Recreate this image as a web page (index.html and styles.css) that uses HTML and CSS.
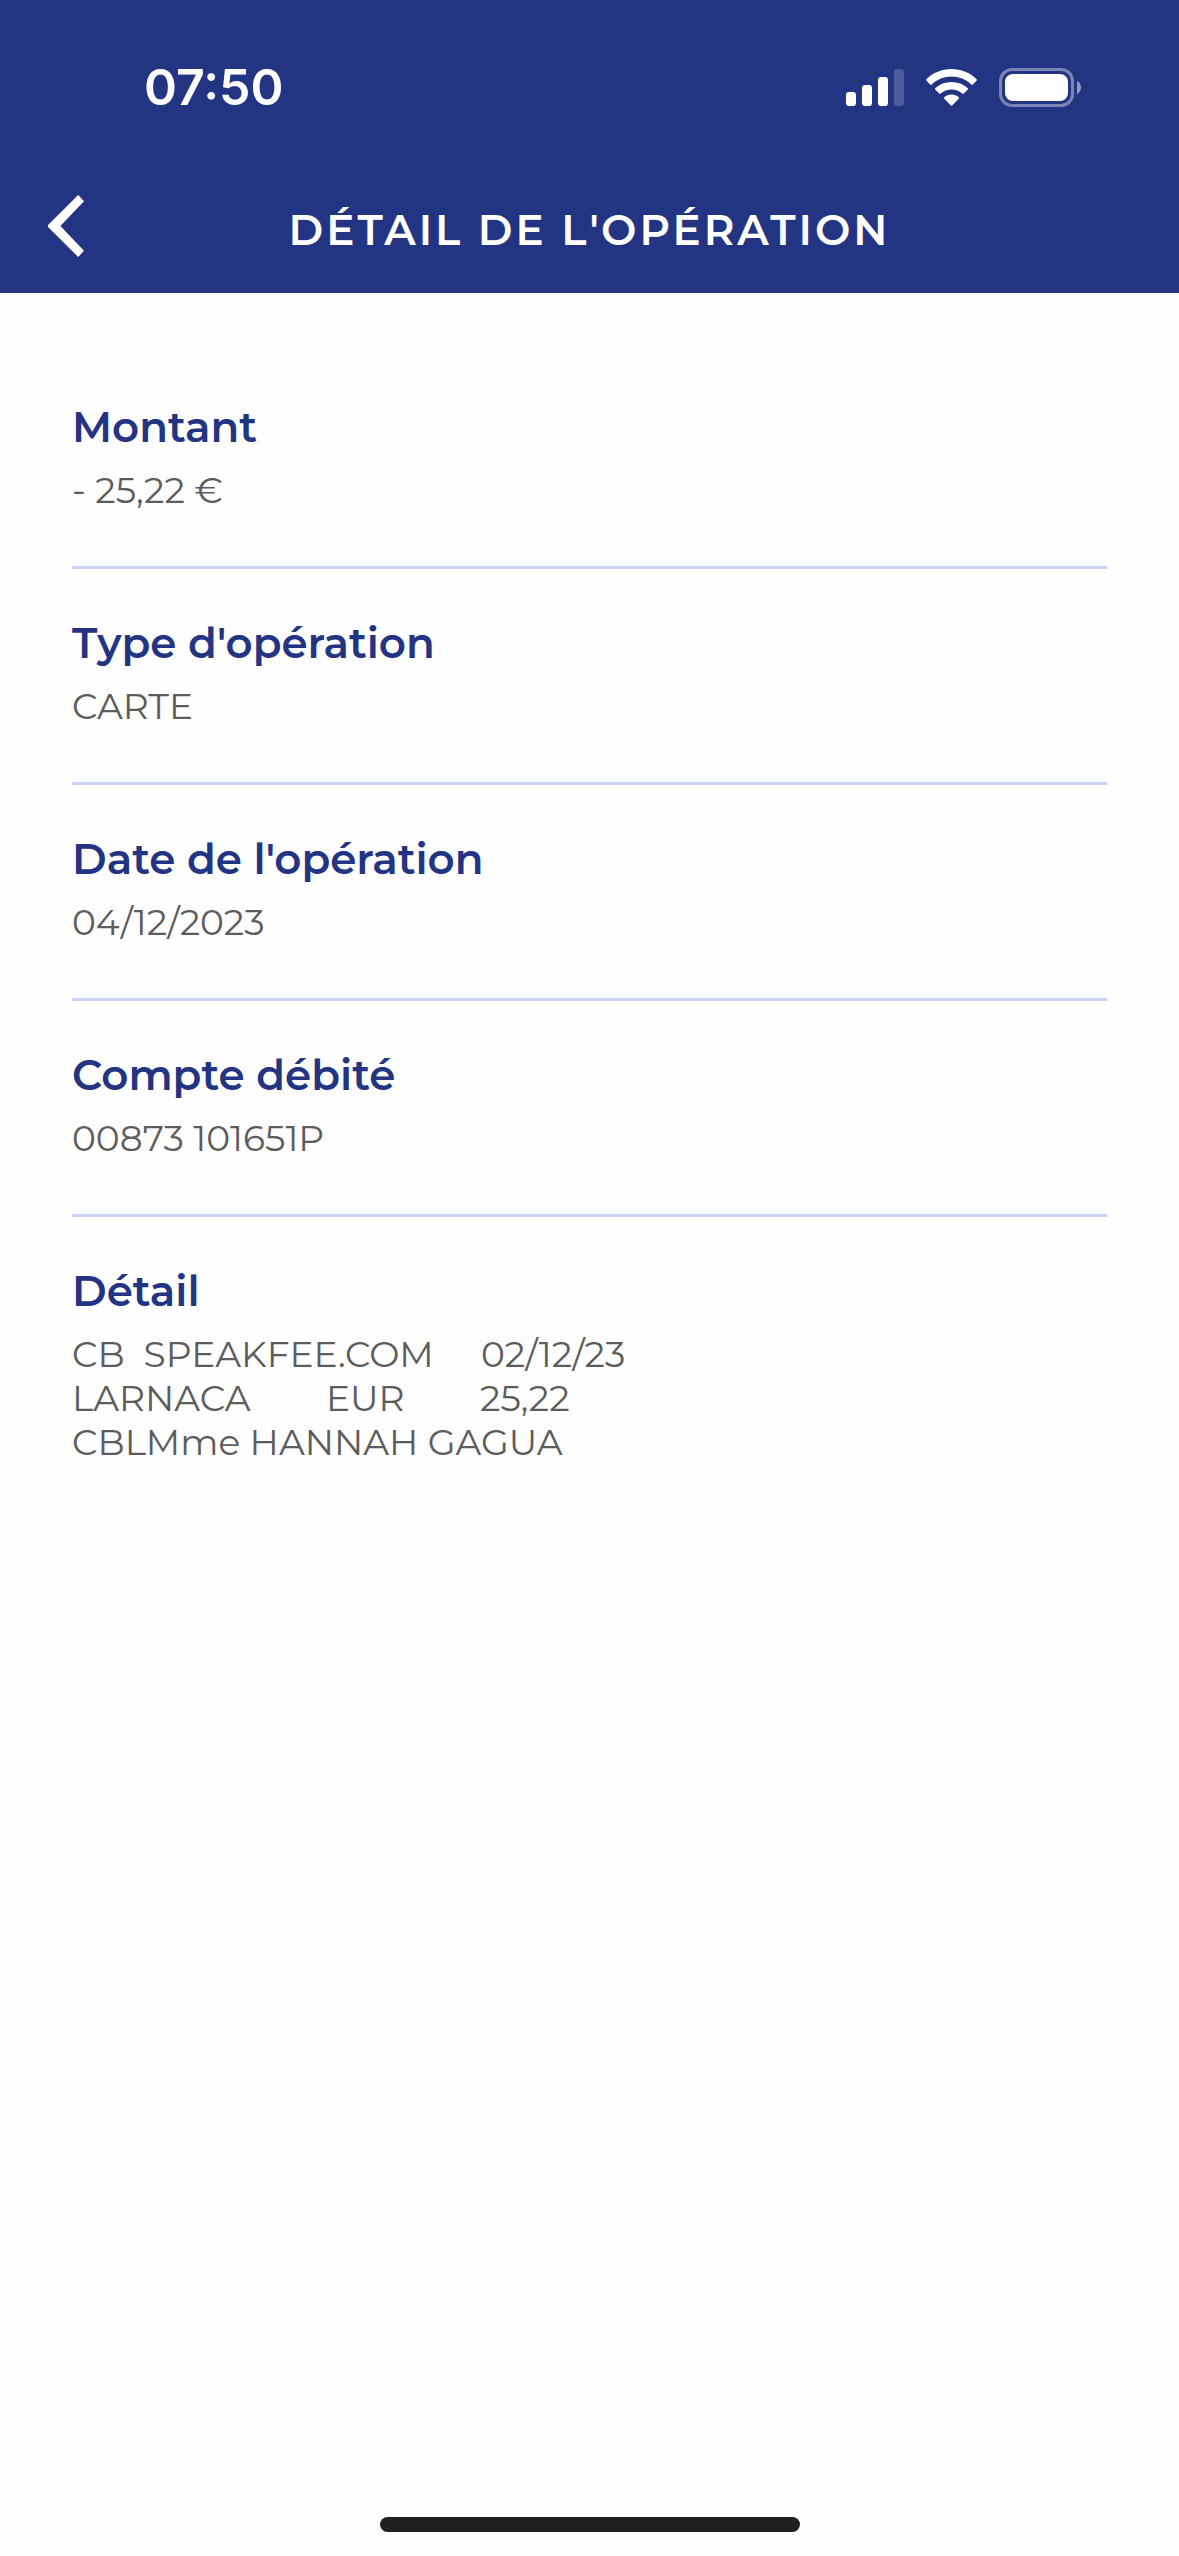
FILE: index.html
```html
<!DOCTYPE html>
<html lang="fr">
<head>
<meta charset="utf-8">
<meta name="viewport" content="width=device-width, initial-scale=1">
<title>Détail de l'opération</title>
<link rel="stylesheet" href="styles.css">
</head>
<body>
<div class="screen">
  <header class="header">
    <div class="status">
      <time class="clock">07:50</time>
      <div class="indicators">
        <svg width="58" height="37" viewBox="0 0 58 37" fill="#fff" aria-label="Réseau" role="img">
          <rect x="0" y="23" width="10" height="14" rx="3"/>
          <rect x="16" y="16" width="10" height="21" rx="3"/>
          <rect x="32" y="8" width="10" height="29" rx="3"/>
          <rect x="48" y="0" width="10" height="37" rx="3" opacity=".2"/>
        </svg>
        <svg width="51" height="37" viewBox="0 0 51 37" fill="#fff" aria-label="Wi-Fi" role="img">
          <path d="M25.500 0C35.100 0 44 3.700 50.400 10.100Q51.200 10.900 50.400 11.700L46.800 15.400Q46 16.100 45.200 15.400C39.900 10.300 33 7.500 25.500 7.500S11.100 10.300 5.800 15.400Q5 16.100 4.200 15.400L.6 11.700Q-.2 10.900.6 10.100C7 3.700 15.900 0 25.500 0Z"/>
          <path d="M25.500 13C31.600 13 37.300 15.200 41.600 19.100Q42.400 19.900 41.600 20.700L37.800 24.400Q37 25.100 36.200 24.400C33.200 21.900 29.500 20.500 25.500 20.500S17.800 21.900 14.800 24.400Q14 25.100 13.200 24.400L9.400 20.700Q8.600 19.900 9.400 19.100C13.700 15.200 19.400 13 25.500 13Z"/>
          <path d="M25.500 25.600C28.200 25.600 30.700 26.500 32.700 28.200Q33.500 29 32.700 29.800L26.300 36.300Q25.500 37 24.700 36.300L18.300 29.800Q17.500 29 18.300 28.200C20.300 26.500 22.800 25.600 25.500 25.600Z"/>
        </svg>
        <svg width="82" height="39" viewBox="0 0 82 39" fill="#fff" aria-label="Batterie" role="img">
          <rect x="1.500" y="1.500" width="72" height="36" rx="11.500" fill="none" stroke="#fff" stroke-width="3" opacity=".4"/>
          <rect x="6" y="6" width="63" height="27" rx="8"/>
          <path d="M78 13C80.500 14.100 82 16.600 82 19.500S80.500 24.900 78 26Z" opacity=".5"/>
        </svg>
      </div>
    </div>
    <div class="navbar">
      <button class="back" type="button" aria-label="Retour">
        <svg width="36" height="62" viewBox="0 0 36 62" fill="#fff" aria-hidden="true">
          <path d="M30.200 0L36 6.200L12.400 31L36 55.800L30.200 62L0 31.900V30.100Z"/>
        </svg>
      </button>
      <h1 class="title">DÉTAIL DE L'OPÉRATION</h1>
    </div>
  </header>
  <main class="content">
    <dl class="details">
      <div class="row"><dt>Montant</dt><dd>- 25,22 €</dd></div>
      <div class="row"><dt>Type d'opération</dt><dd>CARTE</dd></div>
      <div class="row"><dt>Date de l'opération</dt><dd>04/12/2023</dd></div>
      <div class="row"><dt>Compte débité</dt><dd>00873 101651P</dd></div>
      <div class="row"><dt>Détail</dt><dd>CB  SPEAKFEE.COM     02/12/23
LARNACA        EUR        25,22
CBLMme HANNAH GAGUA</dd></div>
    </dl>
  </main>
  <div class="home-bar"></div>
</div>
</body>
</html>
```
FILE: styles.css
```css
* {
  box-sizing: border-box;
}

body {
  margin: 0;
  background: #fefefe;
  color: #5c5c5c;
  font-family: Montserrat, Inter, "Liberation Sans", sans-serif;
}

.screen {
  display: flex;
  flex-direction: column;
  min-height: 100vh;
}

.header {
  background: #233482;
  color: #fff;
}

.status {
  display: flex;
  align-items: center;
  justify-content: space-between;
  height: 174px;
  padding: 0 98px 0 144px;
}

.clock {
  font-family: Inter, "Liberation Sans", sans-serif;
  font-size: 50px;
  font-weight: 600;
}

.indicators {
  display: flex;
  align-items: center;
  gap: 22px;
}

.navbar {
  display: grid;
  grid-template-columns: 96px 1fr 96px;
  align-items: center;
  height: 119px;
  padding-bottom: 16px;
}

.back {
  display: flex;
  width: 96px;
  padding: 0 0 0 48px;
  border: 0;
  background: none;
  cursor: pointer;
}

.title {
  margin: 8px 0 0;
  font-size: 42px;
  font-weight: 600;
  line-height: 52px;
  letter-spacing: 3px;
  text-align: center;
}

.content {
  flex: 1;
  padding: 60px 72px 0;
}

.details {
  margin: 0;
}

.row {
  padding: 48px 0 54px;
  border-bottom: 3px solid #c9d1fb;
}

.row:last-child {
  border-bottom: 0;
}

.row dt {
  color: #233482;
  font-size: 42px;
  font-weight: 600;
  line-height: 52px;
}

.row dd {
  margin: 15px 0 0;
  font-size: 36px;
  font-weight: 400;
  line-height: 44px;
  white-space: pre-wrap;
}

.home-bar {
  align-self: center;
  width: 420px;
  height: 15px;
  margin-bottom: 24px;
  border-radius: 8px;
  background: #202020;
}
```
